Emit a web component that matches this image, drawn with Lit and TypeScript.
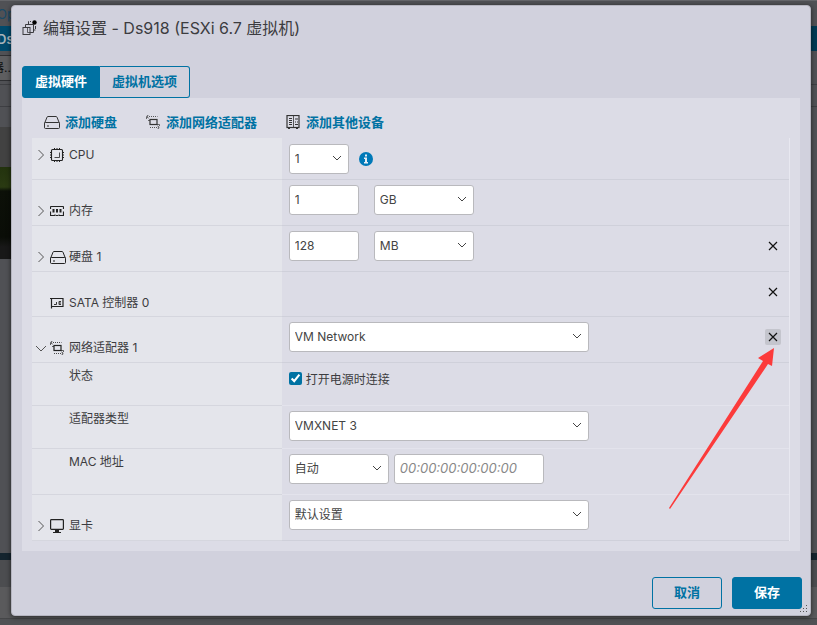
import { LitElement, html, css, svg, nothing, TemplateResult } from "lit";
import { customElement } from "lit/decorators.js";

const diskIcon = html`<svg class="icon" width="16" height="14" viewBox="0 0 16 14" fill="none" stroke="currentColor">
  <path d="M.5 8.5 3 2.2Q3.3 1.5 4 1.5h8q.7 0 1 .7l2.500 6.300v4q0 1-1 1h-13q-1 0-1-1v-4q0-1 1-1h13q1 0 1 1" />
  <path d="M3 11h2" />
  <path d="M.5 8.500v4" />
</svg>`;

const networkIcon = html`<svg class="icon" width="14" height="14" viewBox="0 0 14 14" fill="none" stroke="currentColor">
  <rect x="4" y="4.500" width="7" height="5" stroke-width="1.200" />
  <path d="M3 1.500h8.500M4 12.500h8" stroke-dasharray="1 1" stroke-width=".8" />
  <path d="M2.500 0 .8 1.500l1.700 1.500M11.500 11l1.700 1.500-1.700 1.500" />
  <path d="M.5 1.500v2.500M2 5.500h2M11 9.500h2.500v1.500" stroke-width=".7" />
</svg>`;

const deviceIcon = html`<svg class="icon" width="14" height="14" viewBox="0 0 14 14" fill="none" stroke="currentColor">
  <rect x="1" y=".5" width="12" height="12" stroke-width="1.200" />
  <path d="M7.500 1v11" stroke-width=".8" />
  <path d="M3 3.500h3M3 5.500h3M3 7.500h3M3 9.500h3" stroke-width="1.200" />
  <path d="M9 4h3M9 7h1M11 7h1M9 9.500h3" />
  <path d="M2 13.500h2M10 13.500h2" />
</svg>`;

const cpuIcon = html`<svg class="icon" width="14" height="14" viewBox="0 0 14 14" fill="none" stroke="currentColor">
  <rect x="1.500" y="1.500" width="11" height="11" rx="1" stroke-width="1.100" />
  <path d="M4.500 9.500h5v-5" stroke-width=".8" />
  <path d="M4.500 0v2M7 0v2M9.500 0v2M4.500 12v2M7 12v2M9.500 12v2M0 4.500h2M0 7h2M0 9.500h2M12 4.500h2M12 7h2M12 9.500h2" />
</svg>`;

const memoryIcon = html`<svg class="icon" width="14" height="12" viewBox="0 0 14 12" fill="none" stroke="currentColor">
  <path d="M.5 4V2q0-.5.5-.5h12q.5 0 .5.5v2M.5 6.500v4h4.500V9.500M9 9.500v1h4.500v-4M6 10.500h2" stroke-width="1.200" />
  <path d="M3.500 4v3.500M7 4v3.500M10.500 4v3.500" stroke-width="2" />
</svg>`;

const sataIcon = html`<svg class="icon" width="14" height="12" viewBox="0 0 14 12" fill="none" stroke="currentColor">
  <path d="M0 1.500h13v8H1.500M1.500 1v10.500" stroke-width="1.200" />
  <path d="M4 7.500h2.500v-2.500M11 4.500H9v3h2M9 6h2" stroke-width=".9" />
</svg>`;

const displayIcon = html`<svg class="icon" width="14" height="14" viewBox="0 0 14 14" fill="none" stroke="currentColor">
  <rect x=".6" y=".6" width="12.800" height="9.800" rx=".8" stroke-width="1.200" />
  <path d="M5 12h4" stroke-width="2" />
  <path d="M3 13.500h8" />
</svg>`;

const vmIcon = html`<svg class="icon" width="15" height="16" viewBox="0 0 15 16" fill="none" stroke="currentColor">
  <rect x="1" y="7.500" width="7" height="7" />
  <path d="M3.500 7V4.500h8v8H8" />
  <path d="M5.500 7v5.500h2.500" stroke-width=".8" />
  <path d="M6.500 4V1.500H9M13.500 6v4H12" stroke-dasharray="3 1" />
  <circle cx="12.500" cy="2.500" r="2.200" fill="#000" stroke="none" />
</svg>`;

const crossIcon = html`<svg width="16" height="16" viewBox="0 0 16 16" fill="none" stroke="#111" stroke-width="1.200" aria-hidden="true">
  <path d="m4 4 8 8M12 4l-8 8" />
</svg>`;

const select = (label: string, size: string, options: string[]) => html`<span class="select ${size}">
  <select aria-label=${label}>${options.map((o) => html`<option>${o}</option>`)}</select>
  <svg class="chevron" width="10" height="6" viewBox="0 0 10 6" fill="none" stroke="#444"><path d="m1 1 4 4 4-4" /></svg>
</span>`;

interface Row {
  label: string;
  icon?: TemplateResult;
  kind?: string;
  toggle?: "open" | "closed";
  value?: TemplateResult;
  removable?: boolean;
  marked?: boolean;
}

const rows: Row[] = [
  {
    label: "CPU", icon: cpuIcon, kind: "first", toggle: "closed",
    value: html`${select("CPU", "tiny", ["1"])}
      <svg class="info" width="14" height="14" viewBox="0 0 14 14" role="img" aria-label="i">
        <circle cx="7" cy="7" r="7" fill="#0079b8" />
        <path d="M6 2.500h2v2H6zM5 5.500h3v4.500h1v1.500H5V10h1V7H5z" fill="#e8eef5" />
      </svg>`,
  },
  {
    label: "内存", icon: memoryIcon, toggle: "closed",
    value: html`<input class="text small" aria-label="内存" value="1" />${select("内存单位", "medium", ["GB", "MB"])}`,
  },
  {
    label: "硬盘 1", icon: diskIcon, toggle: "closed", removable: true,
    value: html`<input class="text small" aria-label="硬盘 1" value="128" />${select("硬盘单位", "medium", ["MB", "GB"])}`,
  },
  { label: "SATA 控制器 0", icon: sataIcon, kind: "bare", removable: true },
  {
    label: "网络适配器 1", icon: networkIcon, toggle: "open", removable: true, marked: true,
    value: select("网络适配器 1", "wide", ["VM Network"]),
  },
  {
    label: "状态", kind: "compact sub",
    value: html`<label class="check"><input type="checkbox" checked />打开电源时连接</label>`,
  },
  { label: "适配器类型", kind: "compact sub", value: select("适配器类型", "wide", ["VMXNET 3"]) },
  {
    label: "MAC 地址", kind: "sub tight",
    value: html`${select("MAC 地址", "medium", ["自动", "手动"])}
      <input class="text mac" aria-label="MAC" placeholder="00:00:00:00:00:00" />`,
  },
  { label: "显卡", icon: displayIcon, toggle: "closed", value: select("显卡", "wide", ["默认设置"]) },
];

@customElement("hardware-list")
class HardwareList extends LitElement {
  static styles = css`
    :host {
      display: block;
      border-right: 1px solid #e8e8f0;
    }
    * {
      box-sizing: border-box;
    }
    .row {
      display: grid;
      grid-template-columns: 33% 1fr 32px;
      min-height: 46px;
    }
    .first {
      min-height: 42px;
    }
    .bare {
      min-height: 45px;
    }
    .compact {
      min-height: 43px;
    }
    .name {
      display: flex;
      align-items: flex-start;
      padding: 22px 0 0 3px;
      line-height: 18px;
      background: #e4e5eb;
      border-bottom: 1px solid #d5d6de;
    }
    .first .name {
      padding-top: 8px;
    }
    .sub .name {
      padding-top: 4px;
    }
    .toggle {
      width: 15px;
      height: 18px;
      padding: 0;
      border: 0;
      background: none;
      display: grid;
      place-items: center start;
      flex: none;
    }
    .slot {
      width: 19px;
      height: 18px;
      flex: none;
      display: flex;
      align-items: center;
      color: #222;
    }
    .spacer {
      width: 15px;
      flex: none;
    }
    .value {
      display: flex;
      align-items: flex-start;
      gap: 15px;
      padding: 5px 0 0 7px;
      border-bottom: 1px solid #cfd0da;
    }
    .first .value {
      padding-top: 6px;
    }
    .tight .value {
      gap: 5px;
    }
    .sub .value,
    .sub .end {
      border-color: #e3e3ec;
    }
    .end {
      display: flex;
      justify-content: center;
      padding-top: 12px;
      border-bottom: 1px solid #cfd0da;
    }
    .remove {
      position: relative;
      width: 16px;
      height: 16px;
      padding: 0;
      border: 0;
      border-radius: 2px;
      background: none;
      display: grid;
    }
    .marked {
      background: #c4c5cd;
    }
    .pointer {
      position: absolute;
      top: 19px;
      right: 6px;
      pointer-events: none;
    }
    .select {
      display: grid;
      align-items: center;
    }
    .select select,
    .chevron {
      grid-area: 1 / 1;
    }
    .chevron {
      justify-self: end;
      margin: 0 7px 2px 0;
      pointer-events: none;
    }
    .tiny {
      width: 60px;
    }
    .medium {
      width: 100px;
    }
    .wide {
      width: 300px;
    }
    select,
    .text {
      appearance: none;
      width: 100%;
      height: 30px;
      margin: 0;
      padding: 0 5px;
      font: inherit;
      color: #444;
      background: #fff;
      border: 1px solid #b9b9bd;
      border-radius: 3px;
      outline: 0;
    }
    .text {
      padding-bottom: 1px;
    }
    .small {
      width: 70px;
    }
    .mac {
      width: 150px;
    }
    .mac::placeholder {
      font-size: 13px;
      font-style: italic;
      color: #888;
    }
    .info {
      margin: 8px 0 0 -5px;
    }
    .check {
      display: flex;
      align-items: flex-start;
      gap: 4px;
      padding-top: 3px;
      line-height: 18px;
    }
    .check input {
      width: 13px;
      height: 13px;
      margin: 1px 0 0;
      accent-color: #0072a3;
    }
  `;

  render() {
    return rows.map(
      (r) => html`<div class="row ${r.kind ?? ""}">
        <div class="name">
          ${r.toggle
            ? html`<button class="toggle" aria-label=${r.label}>
                <svg width="12" height="12" viewBox="0 0 12 12" fill="none" stroke="#555">
                  ${r.toggle === "open" ? svg`<path d="m1 4 5 5 5-5" />` : svg`<path d="m3.500 1 5 5-5 5" />`}
                </svg>
              </button>`
            : html`<span class="spacer"></span>`}
          <span class="slot">${r.icon ?? nothing}</span>
          <span>${r.label}</span>
        </div>
        <div class="value">${r.value ?? nothing}</div>
        <div class="end">
          ${r.removable
            ? html`<button class="remove ${r.marked ? "marked" : ""}" aria-label="移除">
                ${crossIcon}
                ${r.marked
                  ? html`<svg class="pointer" width="108" height="162" viewBox="0 0 108 162">
                      <path d="M107 0 91 10l5 3L2 160l1 1L101 16l4 2z" fill="#fc3b3b" />
                    </svg>`
                  : nothing}
              </button>`
            : nothing}
        </div>
      </div>`
    );
  }
}

@customElement("app-root")
class AppRoot extends LitElement {
  static styles = css`
    :host {
      display: block;
      position: relative;
      box-sizing: border-box;
      min-height: 100vh;
      padding: 5px 6px 8px 11px;
      overflow: hidden;
      background: #505155;
      font: 12px/18px Inter, "Noto Sans CJK SC", sans-serif;
      color: #3c3c40;
    }
    * {
      box-sizing: border-box;
    }
    .behind {
      position: absolute;
      inset: 0;
      display: flex;
      flex-direction: column;
    }
    .crumb {
      height: 26px;
      padding-top: 4px;
      font-size: 13px;
      text-indent: -3px;
      color: #1b4a66;
      border-top: 1px solid #646569;
    }
    .nav {
      height: 25px;
      padding-top: 4px;
      background: linear-gradient(90deg, #004a6c 50%, #003a54 50%);
      color: #a9b4ba;
      font-size: 13px;
      font-weight: 600;
      text-indent: -3px;
    }
    .filter {
      height: 34px;
      padding: 4px 0;
      border-bottom: 1px solid #3e3f43;
    }
    .box {
      height: 26px;
      width: 40px;
      padding-top: 3px;
      text-indent: -8px;
      background: #5e5e60;
      border: 1px solid #2f3033;
      border-left: 0;
      color: #111;
    }
    .strip {
      height: 22px;
      border-bottom: 1px solid #3e3f43;
    }
    .gap {
      height: 20px;
    }
    .thumb {
      width: 40px;
      height: 132px;
      background: linear-gradient(#424242 40px, #23330e 40px, #2a3a12 60px, #0c1008 64px, #0a0d07 110px, #181818 120px);
    }
    .fill {
      flex: 1;
    }
    .bar {
      height: 7px;
      background: #14242e;
    }
    .foot {
      height: 65px;
      background: linear-gradient(#4c4d50 27px, #5a5a5c 27px 58px, #454648 58px 59px, #505154 59px);
    }
    .dialog {
      position: relative;
      background: #d1d1dd;
      border: 1px solid #b5b5c0;
      border-radius: 4px;
      box-shadow: 0 1px 5px #0009;
      padding: 0 10px;
    }
    .title {
      display: flex;
      align-items: center;
      gap: 6px;
      height: 60px;
      padding-bottom: 16px;
      margin: 0;
      font-size: 16px;
      font-weight: 400;
      line-height: 24px;
    }
    .tabs {
      display: flex;
    }
    .btn {
      height: 32px;
      padding: 0 12px 2px;
      border: 1px solid #0072a3;
      border-radius: 3px;
      background: none;
      color: #0072a3;
      font: inherit;
      font-size: 13px;
      font-weight: 700;
    }
    .primary {
      background: #0072a3;
      color: #fff;
    }
    .left {
      border-radius: 3px 0 0 3px;
    }
    .right {
      border-radius: 0 3px 3px 0;
      border-left: 0;
    }
    .panel {
      background: #dcdce6;
      padding: 0 10px 10px;
    }
    .tools {
      display: flex;
      gap: 28px;
      height: 40px;
      padding: 8px 0 0 12px;
    }
    .tool {
      display: flex;
      align-items: center;
      gap: 5px;
      height: 32px;
      padding: 0;
      border: 0;
      background: none;
      font: inherit;
      font-size: 13px;
      font-weight: 700;
      color: #0072a3;
    }
    .tool .icon {
      width: 16px;
      color: #333;
    }
    .actions {
      display: flex;
      justify-content: flex-end;
      gap: 10px;
      padding: 26px 0 6px;
      margin-right: -2px;
    }
    .actions .btn {
      min-width: 70px;
    }
    .grip {
      position: absolute;
      right: 2px;
      bottom: 2px;
    }
  `;

  render() {
    return html`
      <div class="behind" aria-hidden="true">
        <div class="crumb">Op</div>
        <div class="nav">Ds</div>
        <div class="filter"><div class="box">器..</div></div>
        <div class="strip"></div>
        <div class="gap"></div>
        <div class="thumb"></div>
        <div class="fill"></div>
        <div class="bar"></div>
        <div class="foot"></div>
      </div>
      <div class="dialog" role="dialog" aria-labelledby="title">
        <h1 class="title" id="title">${vmIcon}<span>编辑设置 - Ds918 (ESXi 6.7 虚拟机)</span></h1>
        <div class="tabs">
          <button class="btn primary left">虚拟硬件</button>
          <button class="btn right">虚拟机选项</button>
        </div>
        <div class="panel">
          <div class="tools">
            <button class="tool">${diskIcon}添加硬盘</button>
            <button class="tool">${networkIcon}添加网络适配器</button>
            <button class="tool">${deviceIcon}添加其他设备</button>
          </div>
          <hardware-list></hardware-list>
        </div>
        <div class="actions">
          <button class="btn">取消</button>
          <button class="btn primary">保存</button>
        </div>
        <svg class="grip" width="8" height="8" viewBox="0 0 8 8" fill="#555">
          <path d="M6 0h1v1H6zM3 3h1v1H3zM6 3h1v1H6zM0 6h1v1H0zM3 6h1v1H3zM6 6h1v1H6z" />
        </svg>
      </div>
    `;
  }
}
